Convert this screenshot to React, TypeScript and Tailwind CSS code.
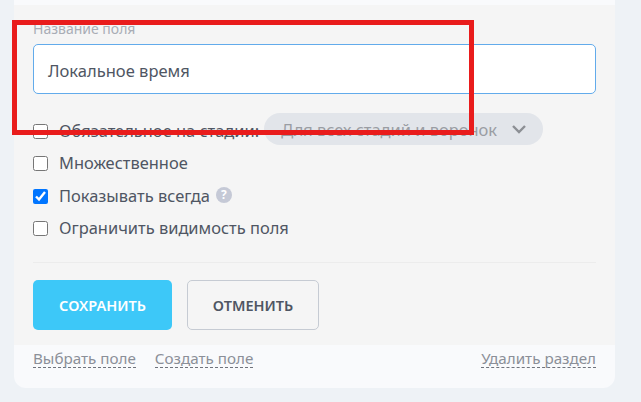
function CheckRow({ label, checked }: { label: string; checked?: boolean }) {
  return (
    <label className="flex items-center h-[32.5px] pt-[4px] text-[16.45px] text-[#4f5663]">
      <input type="checkbox" defaultChecked={checked} className="w-[15px] h-[15px] mr-[11px] accent-[#0075ff]" />
      {label}
    </label>
  );
}

export default function App() {
  return (
    <div className="relative w-[641px] h-[402px] overflow-hidden bg-[#eef2f6] font-['Noto_Sans',sans-serif] pl-[14px] pr-[26px] pb-[14px]">
      <div className="flex flex-col h-full rounded-b-[12px] overflow-hidden bg-[#f9fafc]">
        <div className="h-[5px]" />
        <div className="h-[340px] bg-[#f5f5f5] px-[19px] pt-[14px]">
          <div className="text-[14px] leading-[20px] text-[#a9adb5]">Название поля</div>
          <div className="mt-[5px] h-[50px] flex items-center px-[14px] pt-[4px] bg-white border border-[#62abeb] rounded-[5px] text-[16.55px] text-[#4f5663]">
            Локальное время
          </div>
          <div className="mt-[19px]">
            <div className="flex items-start h-[32.5px]">
              <CheckRow label="Обязательное на стадии:" />
              <div className="ml-[5px] flex items-center h-[32px] w-[279px] pl-[17px] pt-[3px] rounded-full bg-[#e2e5ea] text-[16.45px] text-[#9a9da3]">
                Для всех стадий и воронок
                <svg width="14" height="9" viewBox="0 0 14 9" className="ml-[15px] -mt-[3px] text-[#8c8f94]" fill="none" stroke="currentColor" strokeWidth="2.4">
                  <polyline points="1,1 7,7 13,1" />
                </svg>
              </div>
            </div>
            <CheckRow label="Множественное" />
            <div className="flex items-start">
              <CheckRow label="Показывать всегда" checked />
              <span className="ml-[6px] mt-[9px] flex items-center justify-center w-[16px] h-[16px] rounded-full bg-[#c5c9d6] text-white text-[12px] font-bold">?</span>
            </div>
            <CheckRow label="Ограничить видимость поля" />
          </div>
          <div className="mt-[19px] border-t border-[#ececec]" />
          <div className="mt-[17px] flex gap-[15px]">
            <button className="w-[139px] h-[50px] pt-[1px] rounded-[5px] bg-[#3dc8f8] text-white text-[14.5px] font-semibold">СОХРАНИТЬ</button>
            <button className="w-[132px] h-[50px] pt-[1px] rounded-[5px] border border-[#c6cbd3] text-[#4f5663] text-[14.5px] font-semibold">ОТМЕНИТЬ</button>
          </div>
        </div>
        <div className="flex items-start px-[19px] pt-[4px] text-[15.2px] leading-[18px] text-[#8b8f98]">
          <a className="border-b border-dashed border-[#6f737c]">Выбрать поле</a>
          <a className="ml-[19px] border-b border-dashed border-[#6f737c]">Создать поле</a>
          <a className="ml-auto border-b border-dashed border-[#6f737c]">Удалить раздел</a>
        </div>
      </div>
      <div className="absolute left-[12px] top-[20px] w-[462px] h-[115px] border-[5px] border-[#e91c1c]" />
    </div>
  );
}
